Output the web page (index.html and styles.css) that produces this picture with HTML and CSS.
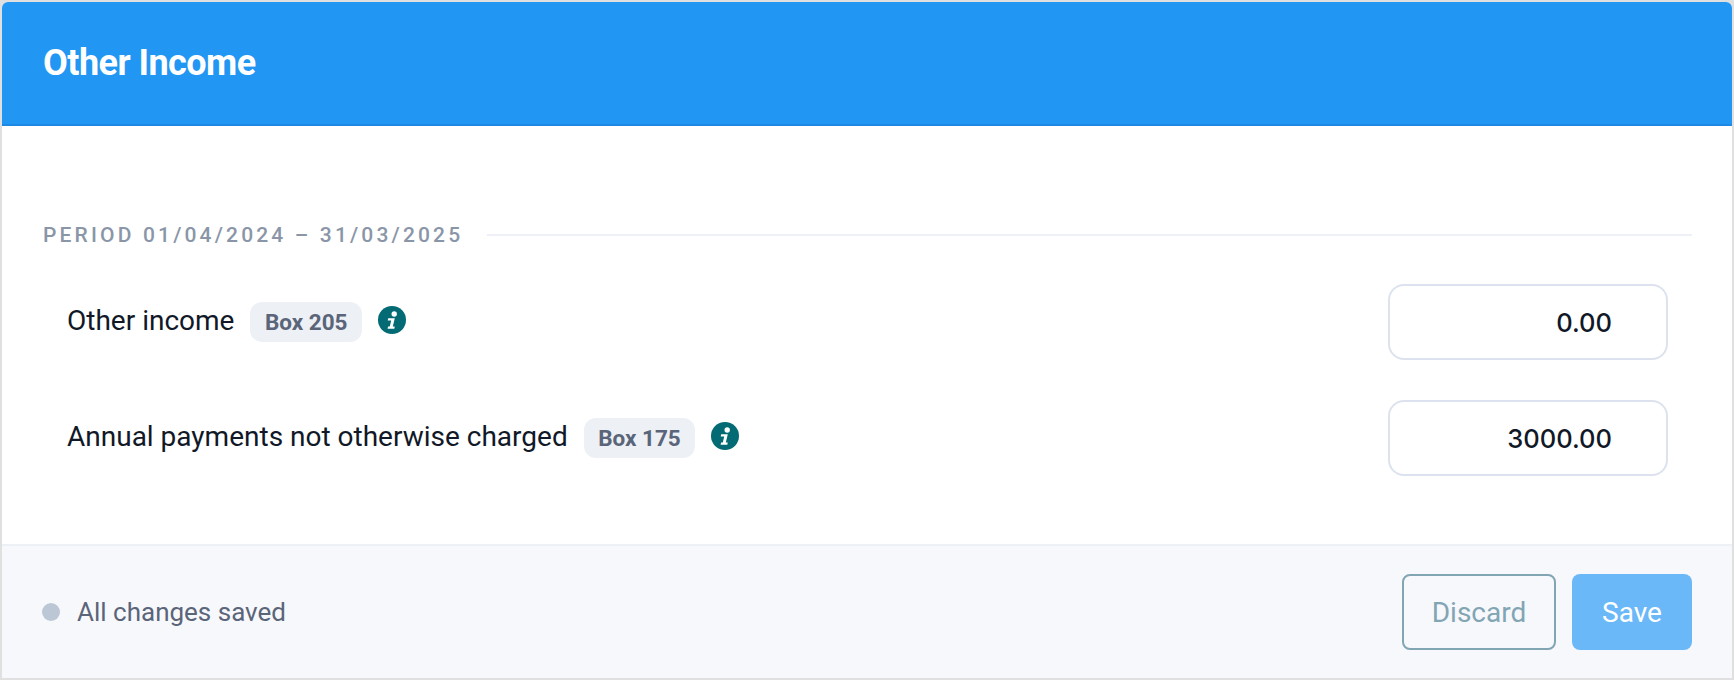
FILE: index.html
```html
<!DOCTYPE html>
<html lang="en">
<head>
  <meta charset="UTF-8" />
  <title>Other Income</title>
  <link rel="stylesheet" href="styles.css">
</head>
<body>

  <div class="card">
    <header class="card-header">
      <h1>Other Income</h1>
    </header>

    <div class="card-body">
      <div class="period">
        <span class="period-label">PERIOD 01/04/2024 – 31/03/2025</span>
        <span class="period-line"></span>
      </div>

      <div class="field-row">
        <div class="field-label">
          <span>Other income</span>
          <span class="box-tag">Box 205</span>
          <svg class="info-icon" viewBox="0 0 28 28"><circle cx="14" cy="14" r="14" fill="#046a73"/><circle cx="16.200" cy="8" r="2.700" fill="#fff"/><path d="M10.200 12.200h6.600l-2 8.200h2l-.5 2.400H9.600l.5-2.400h1.700l1.400-5.800h-3.500z" fill="#fff"/></svg>
        </div>
        <input class="amount" type="text" value="0.00" />
      </div>

      <div class="field-row">
        <div class="field-label">
          <span>Annual payments not otherwise charged</span>
          <span class="box-tag">Box 175</span>
          <svg class="info-icon" viewBox="0 0 28 28"><circle cx="14" cy="14" r="14" fill="#046a73"/><circle cx="16.200" cy="8" r="2.700" fill="#fff"/><path d="M10.200 12.200h6.600l-2 8.200h2l-.5 2.400H9.600l.5-2.400h1.700l1.400-5.800h-3.500z" fill="#fff"/></svg>
        </div>
        <input class="amount" type="text" value="3000.00" />
      </div>
    </div>

    <footer class="card-footer">
      <div class="save-status">
        <span class="status-dot"></span>
        <span>All changes saved</span>
      </div>
      <div class="button-row">
        <button class="btn-discard">Discard</button>
        <button class="btn-save">Save</button>
      </div>
    </footer>
  </div>

</body>
</html>
```

FILE: styles.css
```css
* {
  box-sizing: border-box;
}

body {
  margin: 0;
  padding: 2px;
  height: 680px;
  overflow: hidden;
  background-color: #e0e0e0;
  font-family: Roboto, sans-serif;
}

.card {
  height: 676px;
  display: flex;
  flex-direction: column;
  background-color: #fff;
  border-radius: 6px 6px 0 0;
  overflow: hidden;
}

.card-header {
  height: 124px;
  padding-left: 41px;
  display: flex;
  align-items: center;
  background-color: #2196f3;
  border-bottom: 2px solid #1e88e5;
}

.card-header h1 {
  margin: 0;
  color: #fff;
  font-size: 36px;
  font-weight: 700;
  letter-spacing: -0.55px;
}

.card-body {
  flex: 1;
  padding: 97px 40px 0 41px;
}

.period {
  display: flex;
  align-items: center;
  gap: 24px;
  height: 24px;
}

.period-label {
  color: #8a96a8;
  font-size: 21px;
  font-weight: 500;
  letter-spacing: 3.16px;
  white-space: nowrap;
}

.period-line {
  flex: 1;
  height: 2px;
  background-color: #edf0f6;
}

.field-row {
  display: flex;
  align-items: center;
  justify-content: space-between;
  padding: 0 24px;
  margin-top: 37px;
  height: 76px;
}

.field-row + .field-row {
  margin-top: 40px;
}

.field-label {
  display: flex;
  align-items: center;
  color: #111827;
  font-size: 28px;
  margin-top: -4px;
}

.box-tag {
  margin-left: 16px;
  margin-top: 4px;
  padding: 0 14.5px;
  height: 40px;
  line-height: 40px;
  border-radius: 12px;
  background-color: #edf0f5;
  color: #5a6579;
  font-size: 22.5px;
  font-weight: 700;
}

.info-icon {
  width: 28px;
  height: 28px;
  margin-left: 16px;
}

.amount {
  width: 280px;
  height: 76px;
  padding: 0 54px 0 16px;
  border: 2px solid #dce3ef;
  border-radius: 16px;
  background: #fff;
  color: #111827;
  font-family: Inter, sans-serif;
  font-size: 25.5px;
  font-weight: 500;
  text-align: right;
}

.card-footer {
  height: 134px;
  padding: 0 40px;
  display: flex;
  align-items: center;
  justify-content: space-between;
  background-color: #f7f8fc;
  border-top: 2px solid #edf0f5;
}

.save-status {
  display: flex;
  align-items: center;
  gap: 17px;
  color: #5a6579;
  font-size: 26px;
}

.status-dot {
  width: 18px;
  height: 18px;
  border-radius: 50%;
  background-color: #bcc7d5;
}

.button-row {
  display: flex;
  gap: 16px;
}

.button-row button {
  height: 76px;
  border-radius: 8px;
  font-family: Roboto, sans-serif;
  font-size: 28px;
  cursor: pointer;
}

.btn-discard {
  width: 154px;
  background: transparent;
  border: 2px solid #82a5b4;
  color: #82a5b4;
}

.btn-save {
  width: 120px;
  background-color: #6bb8f8;
  border: none;
  color: #fff;
}
```
